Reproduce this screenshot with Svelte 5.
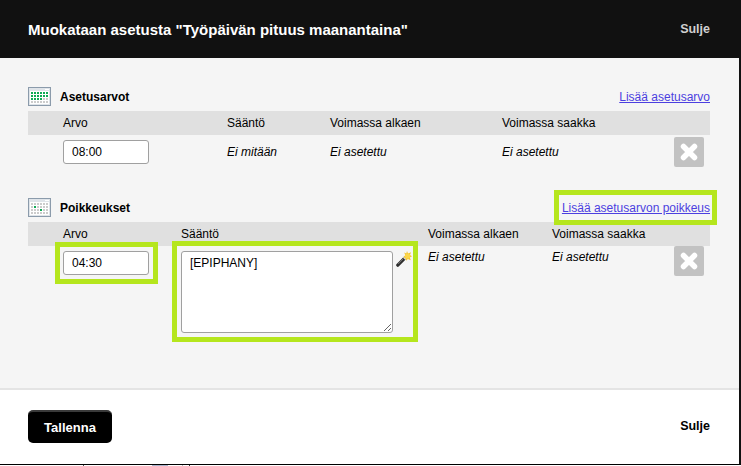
<script>
  const many = ['0,0','1,0','2,0','3,0','4,0','5,0','0,1','1,1','2,1','3,1','4,1','5,1','0,2','1,2','2,2','3,2'];
  const few = ['1,1','3,2'];
  const rows = [0, 1, 2, 3];
  const cols = [0, 1, 2, 3, 4, 5];
</script>

{#snippet cal(on)}
  <svg class="cal" width="23" height="19" viewBox="0 0 23 19">
    <rect x="0.5" y="0.5" width="22" height="18" fill="#dfe4e9" stroke="#8b9bab"/>
    <rect x="2" y="4" width="19" height="13" fill="#fff"/>
    <rect x="17" y="2" width="4" height="1" fill="#fff"/>
    {#each rows as r}{#each cols as c}
      <rect x={3 + c * 3} y={5 + r * 3} width="2" height="2" fill={on.includes(c + ',' + r) ? '#0faa55' : '#cccccc'}/>
    {/each}{/each}
  </svg>
{/snippet}

{#snippet remove()}
  <button class="x" aria-label="Poista">
    <svg width="18" height="18" viewBox="0 0 18 18"><path d="M3.500 3.500 14.500 14.500M14.500 3.500 3.500 14.500" stroke="#fff" stroke-width="5.500" stroke-linecap="round"/></svg>
  </button>
{/snippet}

<div class="page">
  <div class="modal">
    <header class="top">
      <h1>Muokataan asetusta "Työpäivän pituus maanantaina"</h1>
      <span class="close light">Sulje</span>
    </header>
    <main class="body">
      <section class="sec">
        <div class="title">
          <div class="ttl">{@render cal(many)}<h2>Asetusarvot</h2></div>
          <a href="#a" class="add">Lisää asetusarvo</a>
        </div>
        <div class="grid one">
          <div class="th first">Arvo</div><div class="th">Sääntö</div><div class="th">Voimassa alkaen</div><div class="th">Voimassa saakka</div><div class="th"></div>
          <div class="td first center"><input value="08:00" /></div>
          <div class="td center"><em>Ei mitään</em></div>
          <div class="td center"><em>Ei asetettu</em></div>
          <div class="td center"><em>Ei asetettu</em></div>
          <div class="td center">{@render remove()}</div>
        </div>
      </section>
      <section class="sec">
        <div class="title">
          <div class="ttl">{@render cal(few)}<h2>Poikkeukset</h2></div>
          <a href="#b" class="add marked">Lisää asetusarvon poikkeus<span class="mark m-link"></span></a>
        </div>
        <div class="grid two">
          <div class="th first">Arvo</div><div class="th">Sääntö</div><div class="th">Voimassa alkaen</div><div class="th">Voimassa saakka</div><div class="th"></div>
          <div class="td first"><div class="wrap inp"><input value="04:30" /><span class="mark m-input"></span></div></div>
          <div class="td rule">
            <div class="wrap"><textarea>[EPIPHANY]</textarea><span class="mark m-area"></span></div>
            <svg class="wand" width="16" height="16" viewBox="0 0 16 16">
              <path d="M1.800 14.200 8 7.800" stroke="#2e2e2e" stroke-width="3.200" stroke-linecap="round"/>
              <path d="M2.200 13 7 8" stroke="#8a8a8a" stroke-width="0.800"/>
              <path d="M8 7.800 9.500 6.200" stroke="#d5d5d5" stroke-width="3"/>
              <path d="M11 0 12 2.500 15 1.200 14 4 16 5.200 13.800 6.400 14.800 9.200 11.800 8 10.400 9.800 9.500 7.200 7.400 6 9.300 4.300 8.200 1.400 10.300 2.500Z" fill="#f4c430"/>
              <circle cx="11.600" cy="5" r="2.600" fill="#fbd64a"/>
            </svg>
          </div>
          <div class="td text"><em>Ei asetettu</em></div>
          <div class="td text"><em>Ei asetettu</em></div>
          <div class="td">{@render remove()}</div>
        </div>
      </section>
    </main>
    <footer class="bottom">
      <button class="save">Tallenna</button>
      <span class="close">Sulje</span>
    </footer>
  </div>
  <div class="under"><i class="a"></i><i class="b"></i><i class="c"></i><i class="d"></i></div>
</div>

<style>
  :global(body) { margin: 0; background: #fff; }
  .page { width: 741px; height: 466px; overflow: hidden; font-family: "Liberation Sans", Arial, sans-serif; font-size: 12px; color: #000; }
  .modal { width: 741px; height: 465px; box-sizing: border-box; border-right: 2px solid #111; border-bottom: 1px solid #000; display: flex; flex-direction: column; }
  .top { height: 58px; flex: none; box-sizing: border-box; background: #111; color: #fff; display: flex; align-items: center; justify-content: space-between; padding: 0 29px 0 28px; }
  h1 { margin: 0; font-size: 15px; font-weight: bold; }
  .close { font-weight: bold; font-size: 12.500px; }
  .close.light { color: #d0d0d0; }
  .body { flex: none; height: 332px; box-sizing: border-box; background: #f5f5f5; padding: 28px 29px 0 28px; border-bottom: 2px solid #e4e4e4; }
  .sec { height: 111px; }
  .title { display: flex; justify-content: space-between; align-items: center; height: 25px; box-sizing: border-box; padding-bottom: 4px; }
  .ttl { display: flex; align-items: center; gap: 9px; }
  h2 { margin: 0; font-size: 12px; font-weight: bold; }
  .add { color: #4c3fe0; font-size: 12px; line-height: 14px; }
  .marked { position: relative; display: block; }
  .grid { display: grid; }
  .one { grid-template-columns: 199px 103px 172px 172px 36px; grid-template-rows: 24px 34px; }
  .two { grid-template-columns: 153px 247px 124px 122px 36px; grid-template-rows: 24px auto; }
  .th { background: #e0e0e0; display: flex; align-items: center; }
  .first { padding-left: 35px; }
  .td.center { display: flex; align-items: center; }
  .td.text { padding-top: 4px; line-height: 14px; }
  input { display: block; width: 86px; height: 24px; box-sizing: border-box; margin: 0; border: 1px solid #a0a0a0; border-radius: 3px; background: #fff; padding: 0 8px; font: 12px "Liberation Sans", Arial, sans-serif; color: #000; outline: none; }
  .rule { display: flex; gap: 3px; padding-top: 5px; }
  .inp { margin-top: 5px; width: 86px; }
  .wrap { position: relative; }
  textarea { display: block; width: 212px; height: 82px; box-sizing: border-box; margin: 0; border: 1px solid #a0a0a0; border-radius: 3px; background: #fff; padding: 4px 8px; font: 12px "Liberation Sans", Arial, sans-serif; color: #000; outline: none; }
  .mark { position: absolute; box-sizing: border-box; border: 5px solid #b5e61d; pointer-events: none; }
  .m-link { top: -11px; bottom: -10px; left: -8px; right: -7px; }
  .m-input { top: -9px; bottom: -9px; left: -8px; right: -9px; }
  .m-area { top: -10px; bottom: -9px; left: -9px; right: -25px; }
  .x { display: flex; align-items: center; justify-content: center; width: 30px; height: 30px; padding: 0; border: 0; border-radius: 2px; background: #c2c2c2; }
  .bottom { flex: 1; display: flex; align-items: flex-start; justify-content: space-between; padding: 20px 29px 0 28px; background: #fff; }
  .save { width: 84px; height: 33px; box-sizing: border-box; border: 0; border-top: 2px solid #3a3a3a; border-radius: 5px; background: #000; color: #fff; font: bold 13px "Liberation Sans", Arial, sans-serif; }
  .bottom .close { margin-top: 9px; }
  .under { display: flex; height: 1px; }
  .under i { display: block; height: 1px; }
  .a { width: 1px; margin-left: 83px; background: #555; }
  .b { width: 16px; margin-left: 68px; background: #a9b4cc; }
  .c { width: 1px; margin-left: 14px; background: #bbb; }
  .d { width: 1px; margin-left: 6px; background: #333; }
</style>
